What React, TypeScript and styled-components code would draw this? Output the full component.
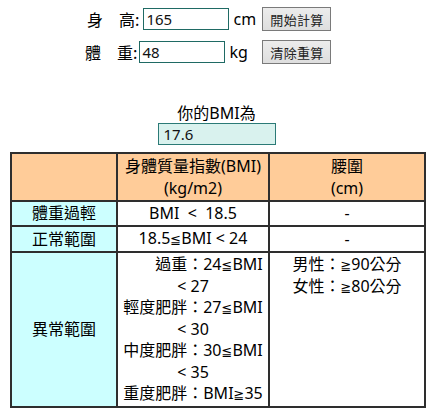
import React from "react";
import styled, { createGlobalStyle } from "styled-components";

const GlobalStyle = createGlobalStyle`
  html, body {
    margin: 0;
    padding: 0;
    background: #ffffff;
  }
  body {
    font-family: "Noto Sans", "Noto Sans CJK TC", sans-serif;
    color: #000;
  }
`;

const Page = styled.div`
  width: 433px;
  padding-top: 7px;
  box-sizing: border-box;
`;

const Form = styled.div`
  display: flex;
  flex-direction: column;
  gap: 9px;
`;

const FormRow = styled.div<{ $indent: number }>`
  display: flex;
  align-items: center;
  height: 24px;
  padding-left: ${(p) => p.$indent}px;
`;

const Label = styled.span`
  font-size: 16px;
  line-height: 20px;
  white-space: nowrap;
  font-family: "Noto Sans CJK TC", sans-serif;
`;

const TextInput = styled.input<{ $gap: number }>`
  box-sizing: border-box;
  width: 86px;
  height: 22px;
  margin-left: ${(p) => p.$gap}px;
  padding: 0 2px;
  border: 1px solid #1f6a64;
  font-family: "Noto Sans", sans-serif;
  font-size: 15px;
  color: #111;
  background: #fff;
  outline: none;
`;

const Unit = styled.span<{ $width: number }>`
  width: ${(p) => p.$width}px;
  margin-left: 4px;
  font-size: 16px;
  line-height: 20px;
`;

const Button = styled.button`
  box-sizing: border-box;
  width: 69px;
  height: 24px;
  padding: 0;
  border: 1px solid #7a7a7a;
  background: linear-gradient(#ececec, #dedede);
  font-family: "Noto Sans CJK TC", sans-serif;
  font-size: 13px;
  color: #222;
  letter-spacing: 0.3px;
`;

const Result = styled.div`
  display: flex;
  flex-direction: column;
  align-items: center;
  margin-top: 39px;
`;

const ResultLabel = styled.div`
  font-size: 16px;
  line-height: 20px;
`;

const ResultBox = styled.input`
  box-sizing: border-box;
  width: 118px;
  height: 22px;
  padding: 0 5px;
  border: 1px solid #2b7a76;
  background: #d9f2ee;
  font-family: "Noto Sans", sans-serif;
  font-size: 15px;
  color: #111;
  outline: none;
`;

const Table = styled.table`
  margin: 7px 0 0 10px;
  width: 414px;
  table-layout: fixed;
  border-collapse: collapse;
  font-size: 16px;
`;

const Cell = styled.td<{ $bg?: string; $valign?: string }>`
  border: 2px solid #2e2e2e;
  padding: 1px 2px;
  text-align: center;
  line-height: 21px;
  vertical-align: ${(p) => p.$valign || "middle"};
  background: ${(p) => p.$bg || "#ffffff"};
  white-space: nowrap;
`;

const HeadCell = styled(Cell)`
  line-height: 22px;
`;

const Line = styled.div`
  text-align: center;
`;

const Sym = styled.span`
  font-family: "DejaVu Sans", sans-serif;
  font-size: 13px;
`;

const HEAD = "#ffcc99";
const SIDE = "#ccffff";

export default function App() {
  return (
    <Page>
      <GlobalStyle />
      <Form>
        <FormRow $indent={87}>
          <Label>{"身　高:"}</Label>
          <TextInput $gap={4} defaultValue="165" />
          <Unit $width={29}>cm</Unit>
          <Button>開始計算</Button>
        </FormRow>
        <FormRow $indent={85}>
          <Label>{"體　重:"}</Label>
          <TextInput $gap={2} defaultValue="48" />
          <Unit $width={33}>kg</Unit>
          <Button>清除重算</Button>
        </FormRow>
      </Form>
      <Result>
        <ResultLabel>你的BMI為</ResultLabel>
        <ResultBox defaultValue="17.6" readOnly />
      </Result>
      <Table>
        <colgroup>
          <col style={{ width: 106 }} />
          <col style={{ width: 152 }} />
          <col style={{ width: 156 }} />
        </colgroup>
        <tbody>
          <tr>
            <HeadCell $bg={HEAD}></HeadCell>
            <HeadCell $bg={HEAD}>
              <Line>身體質量指數(BMI)</Line>
              <Line>(kg/m2)</Line>
            </HeadCell>
            <HeadCell $bg={HEAD}>
              <Line>腰圍</Line>
              <Line>(cm)</Line>
            </HeadCell>
          </tr>
          <tr>
            <Cell $bg={SIDE}>體重過輕</Cell>
            <Cell>{"BMI\u00a0 <\u00a0 18.5"}</Cell>
            <Cell>-</Cell>
          </tr>
          <tr>
            <Cell $bg={SIDE}>正常範圍</Cell>
            <Cell>
              18.5<Sym>≦</Sym>BMI &lt; 24
            </Cell>
            <Cell>-</Cell>
          </tr>
          <tr>
            <Cell $bg={SIDE}>異常範圍</Cell>
            <Cell $valign="top">
              <Line>
                {"　　過重：24"}<Sym>≦</Sym>BMI
              </Line>
              <Line>&lt; 27</Line>
              <Line>
                輕度肥胖：27<Sym>≦</Sym>BMI
              </Line>
              <Line>&lt; 30</Line>
              <Line>
                中度肥胖：30<Sym>≦</Sym>BMI
              </Line>
              <Line>&lt; 35</Line>
              <Line>
                重度肥胖：BMI<Sym>≧</Sym>35
              </Line>
            </Cell>
            <Cell $valign="top">
              <Line>
                男性：<Sym>≧</Sym>90公分
              </Line>
              <Line>
                女性：<Sym>≧</Sym>80公分
              </Line>
            </Cell>
          </tr>
        </tbody>
      </Table>
    </Page>
  );
}
